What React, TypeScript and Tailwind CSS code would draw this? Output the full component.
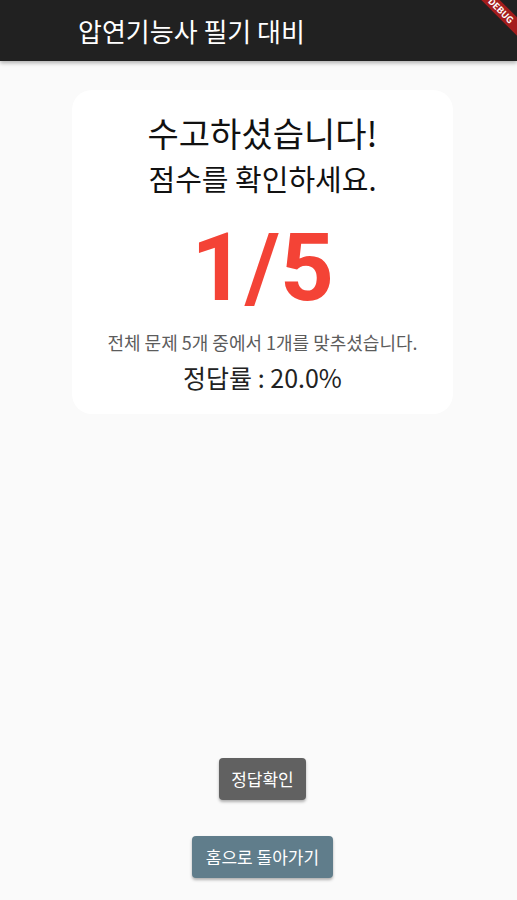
const font = { fontFamily: '"Noto Sans CJK KR", Roboto, "Noto Sans", sans-serif' };

export default function App() {
	return (
		<div className="relative flex h-[900px] w-full flex-col overflow-hidden bg-[#fafafa]" style={font}>
			<header className="flex h-[61px] shrink-0 items-center bg-[#212121] pl-[78px] shadow-[0_2px_4px_rgba(0,0,0,0.3)]">
				<h1 className="text-[26px] font-normal leading-[34px] text-white">압연기능사 필기 대비</h1>
			</header>

			{/* debug ribbon */}
			<div className="pointer-events-none absolute right-[-34px] top-[4px] w-[100px] rotate-45 bg-[#a31d1d] text-center text-[9px] font-bold leading-[13px] text-white">
				DEBUG
			</div>

			<main className="flex flex-1 flex-col items-center">
				<section className="ml-[8px] mt-[29px] flex w-[381px] flex-col items-center rounded-[20px] bg-white pb-[20px] pt-[21px]">
					<p className="text-[34px] leading-[44px] text-[#111]">수고하셨습니다!</p>
					<p className="mt-[3px] text-[29px] leading-[40px] text-[#111]">점수를 확인하세요.</p>
					<p className="mt-[15px] font-['Roboto'] text-[94px] font-bold leading-[110px] text-[#f44336]">1/5</p>
					<p className="mt-[6px] text-[18px] leading-[26px] text-[#5c5c5c]">전체 문제 5개 중에서 1개를 맞추셨습니다.</p>
					<p className="mt-[5px] text-[25px] leading-[34px] text-[#222]">정답률 : 20.0%</p>
				</section>

				<div className="ml-[8px] mt-auto flex flex-col items-center gap-[36px] pb-[22px]">
					<button className="h-[42px] rounded-[4px] bg-[#616161] px-[12px] text-[17px] text-white shadow-[0_2px_3px_rgba(0,0,0,0.3)]">
						정답확인
					</button>
					<button className="h-[42px] rounded-[4px] bg-[#607d8b] px-[14px] text-[17px] text-white shadow-[0_2px_3px_rgba(0,0,0,0.3)]">
						홈으로 돌아가기
					</button>
				</div>
			</main>
		</div>
	);
}
